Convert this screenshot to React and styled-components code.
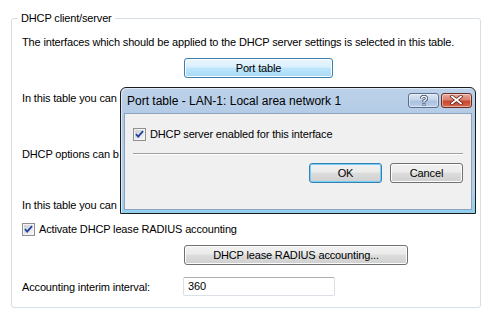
import styled, { createGlobalStyle } from 'styled-components'

const GlobalStyle = createGlobalStyle`
    body {
        margin: 0;
        background: #fff;
        font-family: "Liberation Sans", Arial, sans-serif;
        font-size: 11px;
        letter-spacing: -0.15px;
        color: #000;
    }
`

const Page = styled.div`
    position: relative;
    width: 491px;
    height: 316px;
    overflow: hidden;
`

const GroupBox = styled.fieldset`
    margin: 11px 0 0 11px;
    width: 470px;
    height: 297px;
    box-sizing: border-box;
    min-width: 0;
    border: 1px solid #d5dfe5;
    border-radius: 3px;
    padding: 0 10px;
`

const Legend = styled.legend`
    margin-left: -4px;
    padding: 0 3px;
    line-height: 14px;
`

const Text = styled.div`
    margin-top: ${p => p.$top}px;
    line-height: 14px;
    white-space: nowrap;
    overflow: hidden;
`

const ButtonRow = styled.div`
    margin-top: ${p => p.$top}px;
    padding-left: 162px;
    display: flex;
`

const Button = styled.button`
    width: ${p => p.$w}px;
    height: 20px;
    box-sizing: border-box;
    padding: 0;
    font: inherit;
    letter-spacing: inherit;
    color: #000;
    border: 1px solid ${p => (p.$hot || p.$default ? '#3c7fb1' : '#707070')};
    border-radius: 3px;
    background: ${p =>
        p.$hot
            ? 'linear-gradient(#eaf6fd 0%, #d9f0fc 45%, #bee6fd 50%, #a7d9f5 100%)'
            : 'linear-gradient(#f2f2f2 0%, #ebebeb 45%, #dddddd 50%, #cfcfcf 100%)'};
    box-shadow: ${p => (p.$default ? 'inset 0 0 0 1px #6fd0f6' : 'inset 0 0 0 1px #fcfcfc')};
`

const CheckRow = styled.label`
    margin-top: ${p => p.$top}px;
    display: flex;
    align-items: center;
    gap: 4px;
    height: 14px;
    line-height: 14px;
    white-space: nowrap;
`

const FieldRow = styled.div`
    margin-top: ${p => p.$top}px;
    display: flex;
    align-items: center;
    height: 19px;
`

const FieldLabel = styled.span`
    width: 161px;
`

const Input = styled.div`
    width: 152px;
    height: 19px;
    box-sizing: border-box;
    border: 1px solid #dbdfe6;
    border-top-color: #abadb3;
    border-radius: 2px;
    padding-left: 4px;
    line-height: 17px;
    background: #fff;
`

const Dialog = styled.div`
    position: absolute;
    left: 120px;
    top: 87px;
    width: 356px;
    height: 127px;
    box-sizing: border-box;
    border: 1px solid #1c1c1c;
    border-radius: 6px 6px 0 0;
    padding: 0 3px 3px;
    background: linear-gradient(#bcd2ea 0%, #b3cae6 25%, #b9d0ea 80%, #8fd0ee 100%);
    display: flex;
    flex-direction: column;
    box-shadow: inset 1px 1px 0 #dfeaf6;
`

const TitleBar = styled.div`
    height: 25px;
    display: flex;
    align-items: center;
    padding-left: 3px;
    gap: 2px;
`

const Title = styled.span`
    flex: 1;
    font-size: 12px;
    letter-spacing: 0;
`

const CaptionButton = styled.div`
    width: 31px;
    height: 15px;
    margin-top: -1px;
    box-sizing: border-box;
    border: 1px solid ${p => (p.$close ? '#6e2b22' : '#5b6f8a')};
    border-radius: 3px;
    display: flex;
    align-items: center;
    justify-content: center;
    background: ${p =>
        p.$close
            ? 'linear-gradient(#e9a99c 0%, #d9826e 45%, #c7472f 55%, #d46a4c 100%)'
            : 'linear-gradient(#dbe6f3 0%, #c4d5ea 45%, #a9c0de 55%, #bcd0ea 100%)'};
    box-shadow: inset 0 0 0 1px rgba(255, 255, 255, 0.45);
`

const DialogBody = styled.div`
    flex: 1;
    background: #f0f0f0;
    border: 1px solid #8da3bf;
    padding: 13px 8px 0;
    display: flex;
    flex-direction: column;
`

const Separator = styled.div`
    margin-top: 12px;
    height: 1px;
    background: #a0a0a0;
    box-shadow: 0 1px 0 #fff;
`

const DialogButtons = styled.div`
    margin-top: 9px;
    display: flex;
    justify-content: flex-end;
    gap: 8px;
`

const CheckBox = () => (
    <svg width="13" height="13" viewBox="0 0 13 13">
        <defs>
            <linearGradient id="cbg" x1="0" y1="0" x2="1" y2="1">
                <stop offset="0" stopColor="#cbcfd5" />
                <stop offset="1" stopColor="#f6f6f6" />
            </linearGradient>
        </defs>
        <rect x="0.5" y="0.5" width="12" height="12" fill="#f4f4f4" stroke="#8f8f8f" />
        <rect x="2" y="2" width="9" height="9" fill="url(#cbg)" />
        <path d="M3 6.2 L5.2 8.6 L10 3.2" fill="none" stroke="#21449a" strokeWidth="1.8" />
    </svg>
)

const HelpIcon = () => (
    <svg width="10" height="11" viewBox="0 0 10 11">
        <path d="M2.5 3.5 Q2.5 1.3 5 1.3 Q7.5 1.3 7.5 3.4 Q7.5 4.8 5 5.8 L5 7.2" fill="none" stroke="#3d4f6a" strokeWidth="3" />
        <rect x="3.5" y="8" width="3" height="2.5" fill="#3d4f6a" />
        <path d="M2.5 3.5 Q2.5 1.3 5 1.3 Q7.5 1.3 7.5 3.4 Q7.5 4.8 5 5.8 L5 7.2" fill="none" stroke="#fff" strokeWidth="1.3" />
        <rect x="4.3" y="8.6" width="1.4" height="1.4" fill="#fff" />
    </svg>
)

const CloseIcon = () => (
    <svg width="13" height="10" viewBox="0 0 13 10">
        <path d="M2 1.5 L11 8.5 M11 1.5 L2 8.5" stroke="#5a1a12" strokeWidth="3.4" strokeLinecap="square" />
        <path d="M2 1.5 L11 8.5 M11 1.5 L2 8.5" stroke="#fff" strokeWidth="1.8" strokeLinecap="square" />
    </svg>
)

export default function App() {
    return (
        <Page>
            <GlobalStyle />
            <GroupBox>
                <Legend>DHCP client/server</Legend>
                <Text $top={10}>The interfaces which should be applied to the DHCP server settings is selected in this table.</Text>
                <ButtonRow $top={9}>
                    <Button $w={149} $hot>Port table</Button>
                </ButtonRow>
                <Text $top={13}>In this table you can</Text>
                <Text $top={42}>DHCP options can b</Text>
                <Text $top={37}>In this table you can</Text>
                <CheckRow $top={10}>
                    <CheckBox />
                    Activate DHCP lease RADIUS accounting
                </CheckRow>
                <ButtonRow $top={9}>
                    <Button $w={224}>DHCP lease RADIUS accounting...</Button>
                </ButtonRow>
                <FieldRow $top={12}>
                    <FieldLabel>Accounting interim interval:</FieldLabel>
                    <Input>360</Input>
                </FieldRow>
            </GroupBox>

            <Dialog>
                <TitleBar>
                    <Title>Port table - LAN-1: Local area network 1</Title>
                    <CaptionButton><HelpIcon /></CaptionButton>
                    <CaptionButton $close><CloseIcon /></CaptionButton>
                </TitleBar>
                <DialogBody>
                    <CheckRow $top={0}>
                        <CheckBox />
                        DHCP server enabled for this interface
                    </CheckRow>
                    <Separator />
                    <DialogButtons>
                        <Button $w={73} $default>OK</Button>
                        <Button $w={73}>Cancel</Button>
                    </DialogButtons>
                </DialogBody>
            </Dialog>
        </Page>
    )
}
